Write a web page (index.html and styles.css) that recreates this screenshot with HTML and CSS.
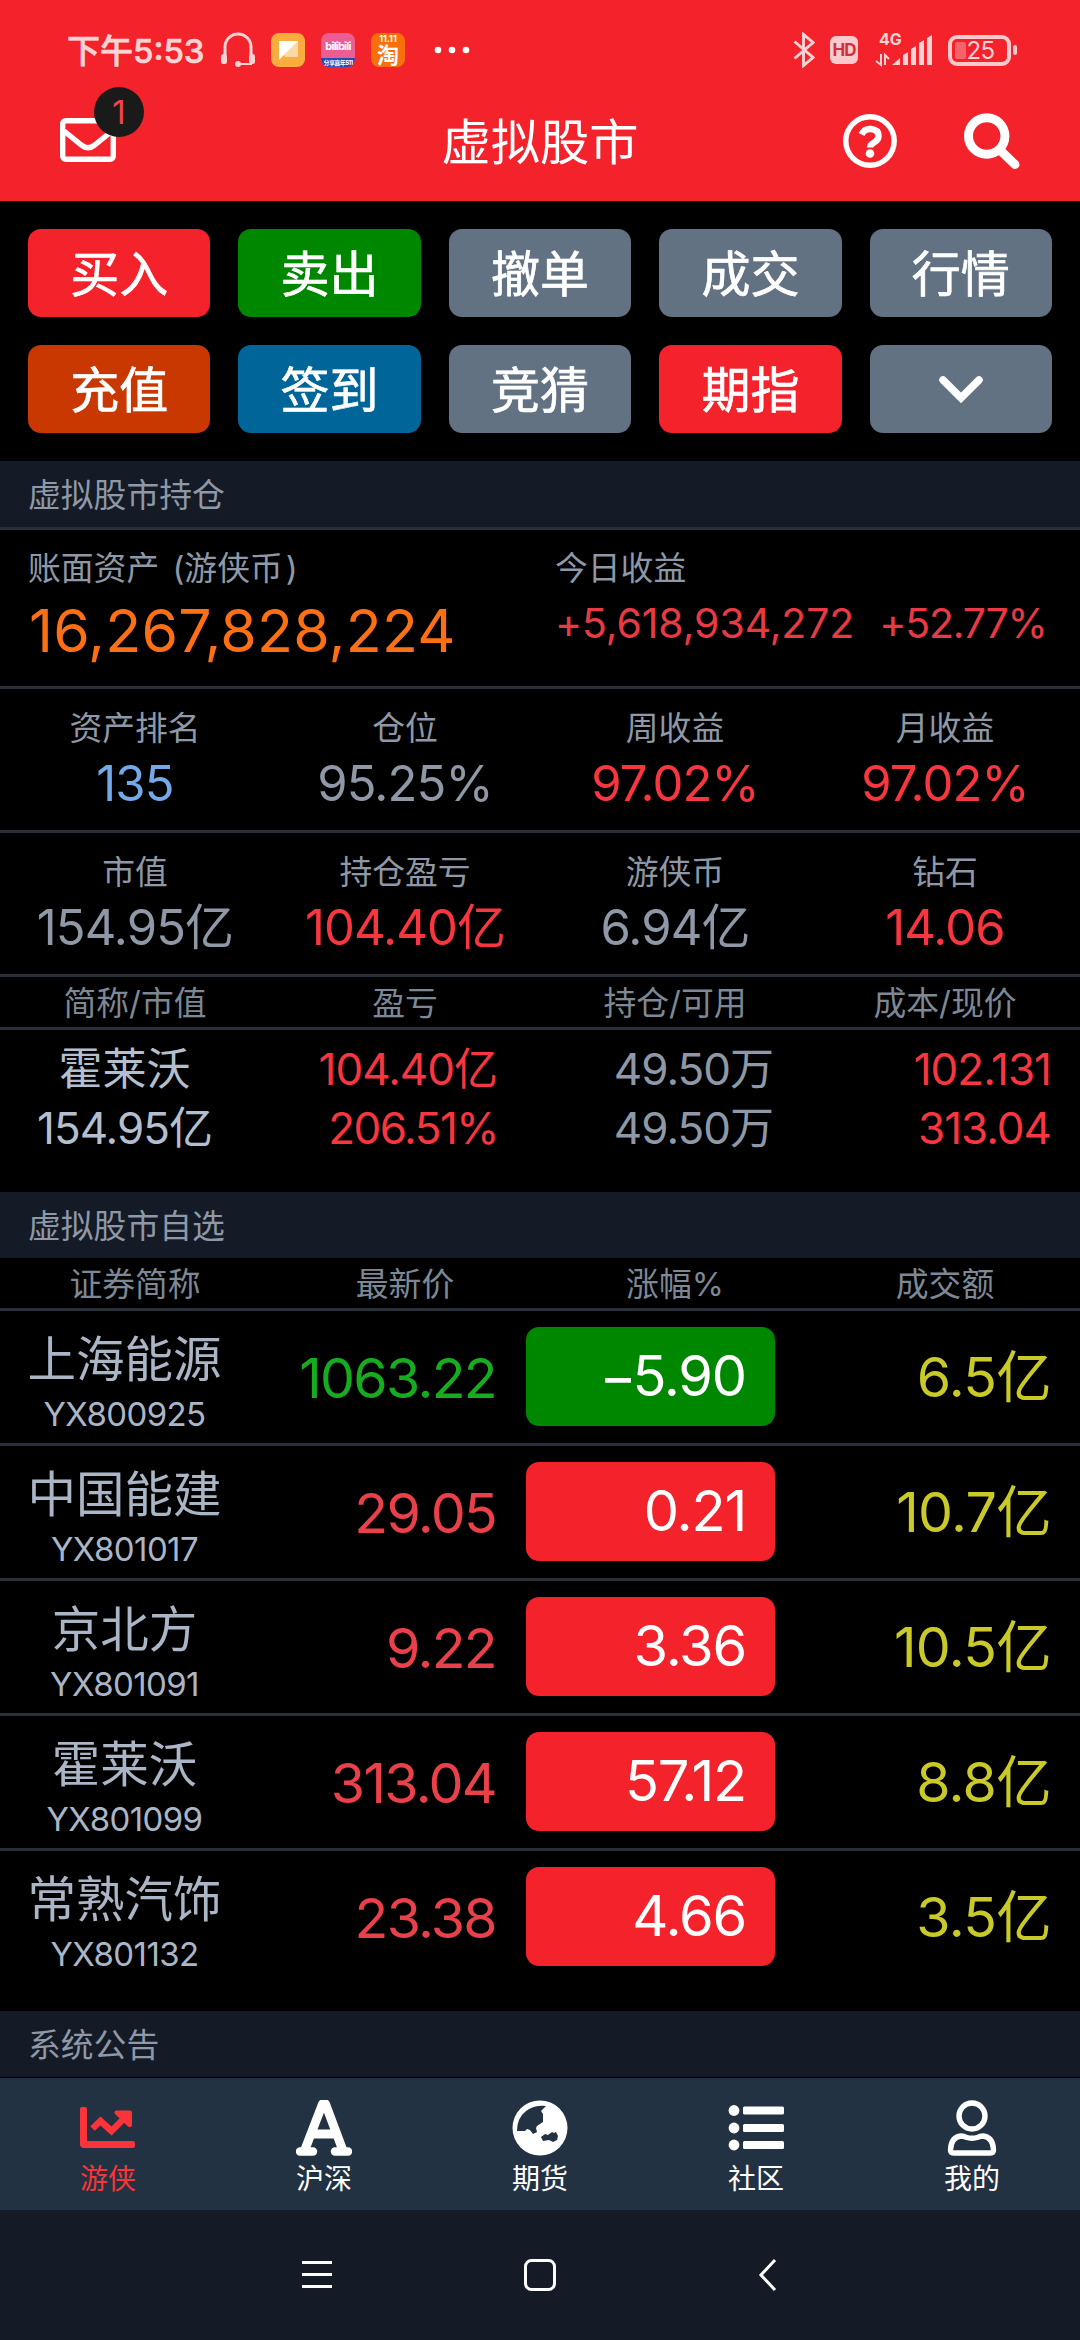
FILE: index.html
```html
<!DOCTYPE html>
<html lang="zh-CN">
<head>
<meta charset="utf-8">
<title>虚拟股市</title>
<link rel="stylesheet" href="styles.css">
</head>
<body>
<header class="top">
  <div class="status">
    <span class="time">下午5:53</span>
    <svg class="st-head" width="36" height="36" viewBox="0 0 36 36"><path d="M5 23V15a13 13 0 0 1 26 0v8" fill="none" stroke="currentColor" stroke-width="3"/><rect x="1" y="22" width="6" height="10" rx="2.5" fill="currentColor"/><rect x="29" y="22" width="6" height="10" rx="2.5" fill="currentColor"/><path d="M31 30v2H19" fill="none" stroke="currentColor" stroke-width="2"/><circle cx="18" cy="32" r="3" fill="currentColor"/></svg>
    <svg class="st-app" width="34" height="34" viewBox="0 0 34 34"><rect width="34" height="34" rx="8" fill="#f9ac40"/><path d="M8 8h19v16H14z" fill="#fcd9a4"/><path d="M8 8h19L8 27z" fill="#fff"/></svg>
    <span class="app bili"><span class="bili-name">bilibili</span><span class="bili-tag">分享嘉年S11</span></span>
    <span class="app tao"><span class="tao-day">11.11</span><span class="tao-name">淘</span></span>
    <svg class="st-dots" width="36" height="8" viewBox="0 0 36 8"><circle cx="4" cy="4" r="3.3" fill="#fff"/><circle cx="18" cy="4" r="3.3" fill="#fff"/><circle cx="32" cy="4" r="3.3" fill="#fff"/></svg>
    <span class="grow"></span>
    <svg class="st-bt" width="22" height="36" viewBox="0 0 22 36"><path d="M1.500 9.500 20 25.500 10.500 33.500V2.500L20 10.500 1.500 26.500" fill="none" stroke="currentColor" stroke-width="2.900"/></svg>
    <span class="hd">HD</span>
    <span class="signal">
      <span class="net">4G</span>
      <svg width="58" height="34" viewBox="0 0 58 34"><path d="M6 21v11l-5-4M10 32V22l4 4" fill="none" stroke="currentColor" stroke-width="2"/><path d="M17 32l8-7v7zM28 32V22l5-3v13zM36 32V16l5-3v19zM44 32V10l5-3v25zM52 32V5l5-3v30z" fill="currentColor"/></svg>
    </span>
    <span class="battery"><span class="charge"></span><span class="pct">25</span></span>
    <span class="cap"></span>
  </div>
  <div class="bar">
    <div class="mail">
      <svg width="56" height="44" viewBox="0 0 56 44"><rect x="2.700" y="2.700" width="50.600" height="38.600" rx="3" fill="none" stroke="#fff" stroke-width="5.400"/><path d="M4 13l18 14.500q6 4.500 12 0L52 13" fill="none" stroke="#fff" stroke-width="5.400"/></svg>
      <span class="badge">1</span>
    </div>
    <h1 class="title">虚拟股市</h1>
    <div class="actions">
      <svg width="54" height="54" viewBox="0 0 54 54"><circle cx="27" cy="27" r="24.200" fill="none" stroke="#fff" stroke-width="5.400"/><path d="M18.500 20.500q3-6 9-5.500 8 .500 8 7 0 4-4.500 6.500-4 2.300-4 5" fill="none" stroke="#fff" stroke-width="6.500"/><circle cx="27" cy="39.500" r="4.300" fill="#fff"/></svg>
      <svg width="56" height="56" viewBox="0 0 56 56"><circle cx="22.700" cy="23" r="18.200" fill="none" stroke="#fff" stroke-width="9"/><path d="M38 39l13 12.500" fill="none" stroke="#fff" stroke-width="9" stroke-linecap="round"/></svg>
    </div>
  </div>
</header>

<nav class="actions-grid">
  <a class="btn red">买入</a><a class="btn green">卖出</a><a class="btn">撤单</a><a class="btn">成交</a><a class="btn">行情</a>
  <a class="btn orange">充值</a><a class="btn blue">签到</a><a class="btn">竞猜</a><a class="btn red">期指</a>
  <a class="btn"><svg width="46" height="30" viewBox="0 0 46 30"><path d="M5 5l18 18L41 5" fill="none" stroke="#fff" stroke-width="7.500" stroke-linecap="round"/></svg></a>
</nav>

<h2 class="section lined">虚拟股市持仓</h2>
<section class="assets">
  <div class="asset"><span class="label wide">账面资产 (游侠币<span class="paren">)</span></span><span class="total">16,267,828,224</span></div>
  <div class="asset"><span class="label">今日收益</span><span class="profit"><span>+5,618,934,272</span><span class="rate">+52.77%</span></span></div>
</section>
<section class="stats">
  <div><span class="label">资产排名</span><span class="num sky">135</span></div>
  <div><span class="label">仓位</span><span class="num">95.25%</span></div>
  <div><span class="label">周收益</span><span class="num up">97.02%</span></div>
  <div><span class="label">月收益</span><span class="num up">97.02%</span></div>
</section>
<section class="stats">
  <div><span class="label">市值</span><span class="num">154.95亿</span></div>
  <div><span class="label">持仓盈亏</span><span class="num up">104.40亿</span></div>
  <div><span class="label">游侠币</span><span class="num">6.94亿</span></div>
  <div><span class="label">钻石</span><span class="num up">14.06</span></div>
</section>
<div class="thead"><span>简称/市值</span><span>盈亏</span><span>持仓/可用</span><span>成本/现价</span></div>
<section class="holding">
  <span class="who">霍莱沃</span><span class="up">104.40亿</span><span>49.50万</span><span class="up">102.131</span>
  <span class="who">154.95亿</span><span class="up ratio">206.51%</span><span>49.50万</span><span class="up">313.04</span>
</section>

<h2 class="section">虚拟股市自选</h2>
<div class="thead watch"><span>证券简称</span><span>最新价</span><span>涨幅%</span><span>成交额</span></div>
<section class="list">
  <div class="row"><div class="stock"><span class="name">上海能源</span><span class="code">YX800925</span></div><span class="price down">1063.22</span><span class="chg fall"><span class="sign">−</span>5.90</span><span class="vol">6.5亿</span></div>
  <div class="row"><div class="stock"><span class="name">中国能建</span><span class="code">YX801017</span></div><span class="price">29.05</span><span class="chg">0.21</span><span class="vol">10.7亿</span></div>
  <div class="row"><div class="stock"><span class="name">京北方</span><span class="code">YX801091</span></div><span class="price">9.22</span><span class="chg">3.36</span><span class="vol">10.5亿</span></div>
  <div class="row"><div class="stock"><span class="name">霍莱沃</span><span class="code">YX801099</span></div><span class="price">313.04</span><span class="chg">57.12</span><span class="vol">8.8亿</span></div>
  <div class="row"><div class="stock"><span class="name">常熟汽饰</span><span class="code">YX801132</span></div><span class="price">23.38</span><span class="chg">4.66</span><span class="vol">3.5亿</span></div>
</section>
<h2 class="section">系统公告</h2>

<nav class="tabs">
  <a class="tab on"><svg width="56" height="56" viewBox="0 0 56 56"><path d="M0 9q0-2 2-2h3q2 0 2 2v32h46q2 0 2 2v3q0 2-2 2H4q-4 0-4-4z" fill="currentColor"/><path d="M12.500 28.500l8-7.500 11 10 12-12" fill="none" stroke="currentColor" stroke-width="6.500"/><path d="M36 10.500h14q2 0 2 2v13q-1 3-4 1L35 14q-1.500-2.500 1-3.500z" fill="currentColor"/></svg><span>游侠</span></a>
  <a class="tab"><svg width="56" height="56" viewBox="0 0 56 56"><path d="M8 52L26.500 4h3l18 48M15 34h26" fill="none" stroke="currentColor" stroke-width="9" stroke-linejoin="round"/><path d="M4 51.500h13M39 51.500h13" stroke="currentColor" stroke-width="8.500" stroke-linecap="round"/></svg><span>沪深</span></a>
  <a class="tab"><svg width="56" height="56" viewBox="0 0 56 56"><circle cx="28" cy="28" r="27.500" fill="currentColor"/><path d="M5 31Q5 18 14 11q8-6 20-5l-5 5 2 3v8l-6 4-1 2 1 4-4 2-3-4-3-1-2 2zM29 37l4-3 3 1 4-3 2 1 2-1 2 4-1 4-4 2-4-2-6 1z" fill="#233242"/></svg><span>期货</span></a>
  <a class="tab"><svg width="56" height="56" viewBox="0 0 56 56"><g fill="currentColor"><circle cx="6" cy="10.500" r="5.400"/><circle cx="6" cy="28" r="5.400"/><circle cx="6" cy="45" r="5.400"/><rect x="15" y="6.500" width="41" height="8" rx="1.500"/><rect x="15" y="24" width="41" height="8" rx="1.500"/><rect x="15" y="41" width="41" height="8" rx="1.500"/></g></svg><span>社区</span></a>
  <a class="tab"><svg width="56" height="56" viewBox="0 0 56 56"><circle cx="28" cy="16" r="13" fill="none" stroke="currentColor" stroke-width="5.400"/><path d="M17 36q3 0 5 1.200 6 2 12 0Q36 36 39 36q10 1 10.500 14 0 3-3 3h-37q-3 0-3-3Q7 37 17 36z" fill="none" stroke="currentColor" stroke-width="5.400"/></svg><span>我的</span></a>
</nav>
<div class="sysnav">
  <svg width="32" height="32" viewBox="0 0 32 32"><path d="M1 3.500h30M1 15.500h30M1 27.500h30" stroke="#fff" stroke-width="3"/></svg>
  <svg width="32" height="32" viewBox="0 0 32 32"><rect x="1.500" y="1.500" width="29" height="29" rx="6" fill="none" stroke="#fff" stroke-width="3"/></svg>
  <svg width="20" height="34" viewBox="0 0 20 34"><path d="M17 2L3 17l14 15" fill="none" stroke="#fff" stroke-width="3"/></svg>
</div>
</body>
</html>
```
FILE: styles.css
```css
* { box-sizing: border-box; }
body {
  margin: 0;
  width: 1080px;
  height: 2340px;
  overflow: hidden;
  display: flex;
  flex-direction: column;
  background: #000;
  color: #8e98a7;
  font-family: Inter, "Noto Sans CJK SC", sans-serif;
  font-size: 32.8px;
}
h1, h2 { margin: 0; font-weight: 400; }
svg { display: block; flex: none; }
span { white-space: nowrap; }

.top { height: 201px; background: #f4222b; flex: none; }
.status {
  height: 100px;
  padding: 0 63px 0 67px;
  display: flex;
  align-items: center;
  color: #fcd3d5;
}
.time { width: 136px; font-size: 33px; font-weight: 500; -webkit-text-stroke: 0.7px currentColor; margin-top: -2px; }
.st-head { margin-left: 17px; }
.st-app { margin-left: 15px; }
.app {
  width: 34px;
  height: 34px;
  border-radius: 8px;
  overflow: hidden;
  display: flex;
  flex-direction: column;
  align-items: center;
  color: #fff;
}
.bili { margin-left: 16px; background: #ee5c94; }
.bili-name { height: 25px; line-height: 26px; font-size: 11px; font-weight: 700; letter-spacing: -0.8px; }
.bili-tag { width: 34px; height: 9px; line-height: 9px; font-size: 6px; font-weight: 700; letter-spacing: -0.6px; background: #1f4bb4; text-align: center; }
.tao { margin-left: 16px; background: #f8700c; }
.tao-day { height: 12px; line-height: 12px; font-size: 9px; font-weight: 700; }
.tao-name { height: 22px; line-height: 21px; font-size: 22px; font-weight: 700; }
.st-dots { margin-left: 29px; }
.grow { flex: 1; }
.hd {
  width: 28px;
  height: 28px;
  margin-left: 15px;
  border-radius: 6px;
  background: #fcc9cc;
  color: #d0303a;
  font-size: 17px;
  font-weight: 700;
  line-height: 29px;
  text-align: center;
  letter-spacing: -1px;
}
.signal { position: relative; margin-left: 17px; }
.net { position: absolute; left: 4px; top: -3px; font-size: 16px; font-weight: 700; line-height: 18px; }
.battery {
  position: relative;
  width: 63px;
  height: 31px;
  margin-left: 15px;
  border: 4px solid #fcc9cc;
  border-radius: 9px;
  display: flex;
  align-items: center;
  justify-content: center;
}
.charge { position: absolute; left: 3px; top: 3px; width: 11px; height: 17px; background: #f8626a; border-radius: 2px; }
.pct { position: relative; left: 1px; font-size: 24px; line-height: 23px; letter-spacing: -0.5px; }
.cap { width: 4px; height: 10px; margin-left: 2px; border-radius: 2px; background: #fcc9cc; }

.bar { height: 101px; padding: 0 60px; display: grid; grid-template-columns: 1fr auto 1fr; align-items: center; }
.mail { position: relative; width: 56px; margin-top: -22px; }
.badge {
  position: absolute;
  left: 34px;
  top: -31px;
  width: 50px;
  height: 50px;
  border-radius: 50%;
  background: #1b1a1b;
  color: #f0434a;
  font-size: 33px;
  line-height: 50px;
  text-align: center;
}
.title { font-size: 49.3px; line-height: 60px; color: #fff; margin-top: -17px; }
.actions { display: flex; justify-content: flex-end; align-items: center; gap: 67px; margin-top: -20px; }

.actions-grid {
  flex: none;
  height: 260px;
  padding: 28px 28px 0;
  display: grid;
  grid-template-columns: repeat(5, 1fr);
  grid-auto-rows: 88px;
  gap: 28px;
}
.btn {
  display: flex;
  align-items: center;
  justify-content: center;
  border-radius: 13px;
  background: #627282;
  color: #fff;
  font-size: 49px;
  line-height: 91px;
  padding-top: 2px;
  -webkit-text-stroke: 0.7px currentColor;
}
.btn.red { background: #f4222b; }
.btn.green { background: #008700; }
.btn.orange { background: #c93800; }
.btn.blue { background: #006699; }

.section { flex: none; height: 66px; padding-left: 28px; background: #141b26; font-size: 32.8px; line-height: 68px; }
.section.lined { height: 69px; border-bottom: 3px solid #28313a; }

.label { line-height: 42px; height: 40px; }
.label.wide { word-spacing: 4px; }
.paren { padding-left: 3px; }
.assets { height: 159px; padding: 17px 0 0 28px; display: grid; grid-template-columns: 527px 1fr; border-bottom: 3px solid #28313a; flex: none; }
.asset { display: flex; flex-direction: column; }
.total { font-size: 59px; line-height: 70px; color: #fc6f14; letter-spacing: 0.2px; margin: 9px 0 0 1px; }
.profit { display: flex; gap: 25px; font-size: 41px; line-height: 56px; color: #e73a43; margin-top: 8px; letter-spacing: -0.1px; }
.profit .rate { letter-spacing: -1.2px; }

.stats { height: 144px; padding-top: 18px; display: grid; grid-template-columns: repeat(4, 1fr); border-bottom: 3px solid #28313a; flex: none; }
.stats div { display: flex; flex-direction: column; align-items: center; }
.num { font-size: 49px; line-height: 60px; margin-top: 7px; letter-spacing: -0.9px; }
.up { color: #f8363f; }
.sky { color: #72a9e6; }

.thead { height: 53px; display: grid; grid-template-columns: repeat(4, 1fr); text-align: center; line-height: 52px; border-bottom: 3px solid #28313a; flex: none; color: #7e8894; }

.holding {
  flex: none;
  height: 162px;
  padding-top: 10px;
  display: grid;
  grid-template-columns: 193px 276px 276px 278px;
  padding-left: 28px;
  grid-auto-rows: 58.500px;
  line-height: 58px;
  font-size: 44px;
  letter-spacing: -1px;
  text-align: right;
}
.holding .who { text-align: center; color: #b3bfce; }
.holding .who:first-child { letter-spacing: 0; }
.holding .ratio { letter-spacing: -1.5px; margin-right: -1px; }

.row {
  height: 135px;
  padding: 0 29px 0 28px;
  display: grid;
  grid-template-columns: 193px 275px 30px 249px 1fr;
  align-items: center;
  border-bottom: 3px solid #28313a;
}
.row:last-child { border-bottom-color: #000; }
.list { flex: none; height: 700px; }
.stock { display: flex; flex-direction: column; align-items: center; color: #aab5c5; padding-top: 9px; }
.name { font-size: 48.500px; line-height: 60px; }
.code { font-size: 33px; line-height: 40px; margin-top: 4px; letter-spacing: -0.6px; }
.price { font-size: 55.500px; text-align: right; color: #e9404a; letter-spacing: -1.7px; }
.price.down { color: #17ab1f; }
.chg { grid-column: 4; height: 99px; margin-top: -1px; padding-right: 29px; border-radius: 13px; background: #f4222b; color: #fff; font-size: 56px; line-height: 99px; text-align: right; letter-spacing: -1.2px; }
.chg.fall { background: #008700; }
.sign { letter-spacing: -4px; }
.vol { font-size: 55.500px; line-height: 80px; text-align: right; color: #c9c929; letter-spacing: -0.7px; }

.tabs { height: 133px; border-top: 1px solid #000; background: #233242; display: grid; grid-template-columns: repeat(5, 1fr); flex: none; }
.tab { display: flex; flex-direction: column; align-items: center; padding-top: 22px; color: #fff; font-size: 28px; line-height: 36px; }
.tab span { margin-top: 5px; }
.tab.on { color: #fb3439; }

.sysnav { height: 130px; background: #141b26; display: flex; align-items: center; padding-left: 301px; flex: none; }
.sysnav svg + svg { margin-left: 191px; }
.sysnav svg + svg + svg { margin-left: 202px; }
```
